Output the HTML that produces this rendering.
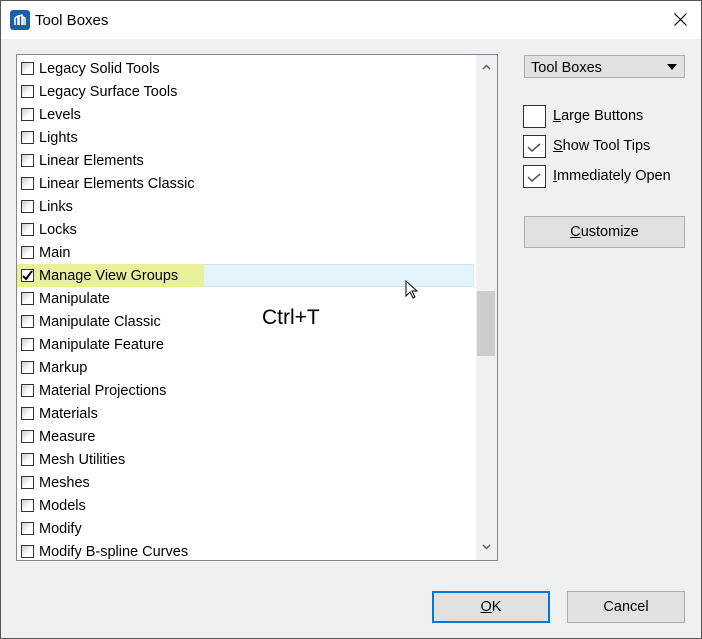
<!DOCTYPE html>
<html><head><style>
*{margin:0;padding:0;box-sizing:border-box}
body{width:702px;height:639px;background:#f0f0f0;font-family:"Liberation Sans",Arial,sans-serif;font-size:14px;color:#000;position:relative;overflow:hidden}
.abs{position:absolute}
.title{left:0;top:0;width:702px;height:39px;background:#fff}
.list{left:16px;top:54px;width:482px;height:507px;background:#fff;border:1px solid #828790;overflow:hidden}
.row{position:absolute;left:0;height:23px;width:460px}
.cb{position:absolute;left:4px;top:5px;width:13px;height:13px;border:1px solid #333;background:linear-gradient(135deg,#ccc,#fff 60%)}
.row span{position:absolute;left:22px;top:4px;font-size:14.5px}
.btn{background:#e1e1e1;border:1px solid #adadad;text-align:center;font-size:14.5px}
.chk{width:23px;height:23px;border:1px solid #333;background:#fff}
</style></head><body>
<div class="abs title"></div>
<div class="abs" style="left:0;top:0;width:702px;height:639px;border:1px solid #555;z-index:5;pointer-events:none"></div>
<div class="abs" style="left:10px;top:10px;width:20px;height:20px;background:#1b5fa8;border-radius:3px"><svg width="20" height="20"><path d="M5 15V8l3-2v9M9 15V6l3-1v10M13 15V7l2 1v7" stroke="#fff" stroke-width="1.5" fill="none"/></svg></div>
<div class="abs" style="left:35px;top:12px;font-size:15px">Tool Boxes</div>
<svg class="abs" style="left:674px;top:13px" width="13" height="13"><path d="M0.5 0.5l12 12M12.5 0.5l-12 12" stroke="#000" stroke-width="1.2"/></svg>
<div class="abs list">
<div class="abs" style="left:-3px;top:209px;width:460px;height:23px;background:#e5f3fb;border:1px solid #cce8ff"></div>
<div class="abs" style="left:-3px;top:209px;width:190px;height:23px;background:#e8f19a"></div>
<div id="rows"></div>
<div class="abs" style="left:459px;top:0;width:21px;height:505px;background:#f0f0f0"></div>
<div class="abs" style="left:460px;top:236px;width:18px;height:65px;background:#cdcdcd"></div>
<svg class="abs" style="left:465px;top:9px" width="9" height="6"><path d="M1 5l3.5-3.5L8 5" stroke="#606060" stroke-width="1.5" fill="none"/></svg>
<svg class="abs" style="left:465px;top:489px" width="9" height="6"><path d="M1 1l3.5 3.5L8 1" stroke="#606060" stroke-width="1.5" fill="none"/></svg>
<div class="abs" style="left:245px;top:251px;font-size:21px">Ctrl+T</div>
<svg class="abs" style="left:388px;top:225px" width="14" height="20"><path d="M1 1v15l4-4 3 6 2-1-3-6h5z" fill="#fff" stroke="#000"/></svg>
</div>
<div class="abs btn" style="left:524px;top:55px;width:161px;height:23px;text-align:left;padding:4px 6px">Tool Boxes<svg style="position:absolute;right:7px;top:8px" width="10" height="6"><path d="M0 0h10L5 6z" fill="#000"/></svg></div>
<div class="abs chk" style="left:523px;top:105px"></div>
<div class="abs" style="left:553px;top:108px;font-size:14.5px"><u>L</u>arge Buttons</div>
<div class="abs chk" style="left:523px;top:135px"><svg width="21" height="21"><path d="M4 11l4 4 8-7" stroke="#555" stroke-width="1.5" fill="none"/></svg></div>
<div class="abs" style="left:553px;top:138px;font-size:14.5px"><u>S</u>how Tool Tips</div>
<div class="abs chk" style="left:523px;top:165px"><svg width="21" height="21"><path d="M4 11l4 4 8-7" stroke="#555" stroke-width="1.5" fill="none"/></svg></div>
<div class="abs" style="left:553px;top:168px;font-size:14.5px"><u>I</u>mmediately Open</div>
<div class="abs btn" style="left:524px;top:216px;width:161px;height:32px;line-height:31px"><u>C</u>ustomize</div>
<div class="abs btn" style="left:432px;top:591px;width:118px;height:32px;line-height:29px;border:2px solid #0078d7"><u>O</u>K</div>
<div class="abs btn" style="left:567px;top:591px;width:118px;height:32px;line-height:31px">Cancel</div>
<script>
var n=["Legacy Solid Tools","Legacy Surface Tools","Levels","Lights","Linear Elements","Linear Elements Classic","Links","Locks","Main","Manage View Groups","Manipulate","Manipulate Classic","Manipulate Feature","Markup","Material Projections","Materials","Measure","Mesh Utilities","Meshes","Models","Modify","Modify B-spline Curves"];
var h="";n.forEach(function(t,i){h+='<div class="row" style="top:'+(2+i*23)+'px"><div class="cb" style="'+(i==9?'background:#fff':'')+'">'+(i==9?'<svg width="11" height="11" style="position:absolute;left:0;top:0"><path d="M1 6l3 3 6-8" stroke="#000" stroke-width="2" fill="none"/></svg>':'')+'</div><span>'+t+'</span></div>'});
document.getElementById("rows").innerHTML=h;
</script>
</body></html>
